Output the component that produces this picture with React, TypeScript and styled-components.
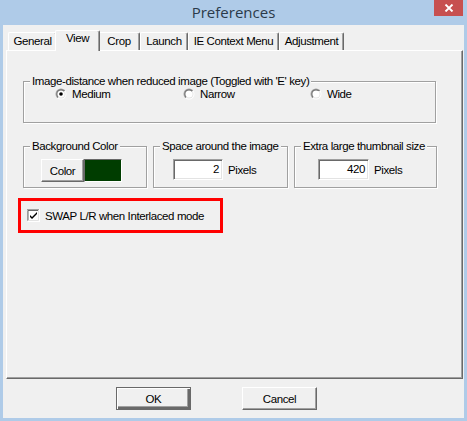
import React from "react";
import styled, { createGlobalStyle } from "styled-components";

const UI_FONT = `"Liberation Sans", Arial, sans-serif`;

const GlobalStyle = createGlobalStyle`
  html, body { margin: 0; padding: 0; }
  body {
    background: #afcbe8;
    font-family: ${UI_FONT};
    font-size: 11.5px;
    letter-spacing: -0.4px;
    color: #000;
  }
`;

const Window = styled.div`
  width: 467px;
  height: 421px;
  box-sizing: border-box;
  background: #afcbe8;
  display: flex;
  flex-direction: column;
`;

const TitleBar = styled.div`
  height: 25px;
  display: grid;
  grid-template-columns: 1fr auto 1fr;
  align-items: start;
`;

const Title = styled.div`
  grid-column: 2;
  font-family: "Open Sans", "Noto Sans", sans-serif;
  font-size: 15px;
  letter-spacing: 0;
  line-height: 20px;
  padding-top: 2px;
  color: #2b3a4a;
`;

const CloseButton = styled.div`
  grid-column: 3;
  justify-self: end;
  margin-right: 4px;
  width: 29px;
  height: 16px;
  background: #c75050;
  display: flex;
  align-items: center;
  justify-content: center;
`;

const Client = styled.div`
  flex: 1;
  margin: 0 3px 3px 3px;
  background: #f0f0f0;
  display: flex;
  flex-direction: column;
  padding: 5px 0 0 3px;
`;

const TabStrip = styled.div`
  display: flex;
  align-items: flex-end;
  height: 20px;
  padding-left: 2px;
`;

const Tab = styled.div<{ $w: number; $active?: boolean }>`
  box-sizing: border-box;
  width: ${(p) => p.$w + (p.$active ? 4 : 0)}px;
  height: ${(p) => (p.$active ? 21 : 18)}px;
  margin: 0 ${(p) => (p.$active ? -2 : 0)}px ${(p) => (p.$active ? -1 : 0)}px;
  position: relative;
  z-index: ${(p) => (p.$active ? 2 : 1)};
  background: #f0f0f0;
  border-top: 1px solid #fff;
  border-left: 1px solid #fff;
  border-right: 1px solid #696969;
  box-shadow: inset -1px 0 0 #a0a0a0;
  border-radius: 2px 2px 0 0;
  text-align: center;
  line-height: ${(p) => (p.$active ? 15 : 17)}px;
  white-space: nowrap;
`;

const Panel = styled.div`
  box-sizing: border-box;
  width: 457px;
  height: 329px;
  border-style: solid;
  border-width: 1px;
  border-color: #fff #696969 #696969 #fff;
  box-shadow: inset -1px -1px 0 #a0a0a0;
  padding: 30px 0 0 16px;
  display: flex;
  flex-direction: column;
  align-items: flex-start;
`;

const GroupBox = styled.div<{ $w: number }>`
  box-sizing: border-box;
  width: ${(p) => p.$w}px;
  height: 42px;
  border: 1px solid #a0a0a0;
  box-shadow: 1px 1px 0 #fff, inset 1px 1px 0 #fff;
  display: flex;
  flex-direction: column;
`;

const Legend = styled.div`
  align-self: flex-start;
  margin: -7px 0 0 6px;
  padding: 0 2px;
  line-height: 13px;
  background: #f0f0f0;
  white-space: nowrap;
`;

const RadioRow = styled.div`
  display: grid;
  grid-template-columns: 128px 127px auto;
  padding-left: 31px;
  height: 12px;
  align-items: center;
`;

const Option = styled.label`
  display: flex;
  align-items: center;
  gap: 5px;
  line-height: 12px;
`;

const Row = styled.div`
  display: flex;
  gap: 6px;
  margin-top: 23px;
`;

const GroupBody = styled.div<{ $pl: number }>`
  display: flex;
  align-items: center;
  padding-left: ${(p) => p.$pl}px;
  margin-top: 6px;
  gap: 5px;
`;

const PushButton = styled.button<{ $w: number; $default?: boolean }>`
  box-sizing: border-box;
  width: ${(p) => p.$w}px;
  height: 23px;
  padding: 0;
  margin: 0;
  font-family: ${UI_FONT};
  font-size: 11.5px;
  letter-spacing: -0.4px;
  color: #000;
  background: #f0f0f0;
  border-style: solid;
  border-width: 1px;
  border-color: ${(p) =>
    p.$default ? "#696969" : "#fff #696969 #696969 #fff"};
  box-shadow: ${(p) =>
    p.$default
      ? "inset 1px 1px 0 #fff, inset -2px -2px 0 #696969, inset -3px -3px 0 #a0a0a0"
      : "inset -1px -1px 0 #a0a0a0"};
  outline: none;
`;

const Swatch = styled.div<{ $c: string }>`
  width: 38px;
  height: 23px;
  box-sizing: border-box;
  background: ${(p) => p.$c};
  border: 1px solid #000;
  border-color: #696969 #fff #fff #696969;
  margin-left: -5px;
`;

const NumInput = styled.div<{ $w: number }>`
  box-sizing: border-box;
  width: ${(p) => p.$w}px;
  height: 21px;
  background: #fff;
  border-style: solid;
  border-width: 1px;
  border-color: #a0a0a0 #fff #fff #a0a0a0;
  box-shadow: inset 1px 1px 0 #696969, inset -1px -1px 0 #e3e3e3;
  text-align: right;
  padding-right: 3px;
  line-height: 19px;
`;

const Highlight = styled.div`
  box-sizing: border-box;
  width: 205px;
  height: 35px;
  margin: 10px 0 0 -5px;
  border: 3px solid #ff0000;
  display: flex;
  align-items: center;
  gap: 5px;
  padding-left: 6px;
  white-space: nowrap;
`;

const ButtonRow = styled.div`
  display: flex;
  gap: 51px;
  padding: 8px 0 0 110px;
`;

function Radio({ checked }: { checked?: boolean }) {
  return (
    <svg width="12" height="12" viewBox="0 0 12 12">
      <defs>
        <linearGradient id="rg" x1="0" y1="0" x2="1" y2="1">
          <stop offset="0.5" stopColor="#a0a0a0" />
          <stop offset="0.5" stopColor="#ffffff" />
        </linearGradient>
        <linearGradient id="rg2" x1="0" y1="0" x2="1" y2="1">
          <stop offset="0.5" stopColor="#696969" />
          <stop offset="0.5" stopColor="#e3e3e3" />
        </linearGradient>
      </defs>
      <circle cx="6" cy="6" r="5.5" fill="url(#rg)" />
      <circle cx="6" cy="6" r="4.5" fill="url(#rg2)" />
      <circle cx="6" cy="6" r="3.6" fill="#fff" />
      {checked && <circle cx="6" cy="6" r="1.8" fill="#000" />}
    </svg>
  );
}

function Check() {
  return (
    <svg width="13" height="13" viewBox="0 0 13 13">
      <rect x="0" y="0" width="13" height="13" fill="#fff" />
      <path d="M0 12.5V0.5H12.5" stroke="#a0a0a0" fill="none" />
      <path d="M1 11.5V1.5H11.5" stroke="#696969" fill="none" />
      <path d="M0.5 12.5H12.5V0" stroke="#fff" fill="none" />
      <path d="M1.5 11.5H11.5V1" stroke="#e3e3e3" fill="none" />
      <path d="M3 6 L5 8 L10 3 L10 5 L5 10 L3 8 Z" fill="#000" />
    </svg>
  );
}

export default function App() {
  return (
    <>
      <GlobalStyle />
      <Window>
        <TitleBar>
          <Title>Preferences</Title>
          <CloseButton>
            <svg width="10" height="8" viewBox="0 0 10 8">
              <path d="M1.5 0.5 L8.5 7.5 M8.5 0.5 L1.5 7.5" stroke="#fff" strokeWidth="1.9" />
            </svg>
          </CloseButton>
        </TitleBar>
        <Client>
          <TabStrip>
            <Tab $w={49}>General</Tab>
            <Tab $w={41} $active>View</Tab>
            <Tab $w={42}>Crop</Tab>
            <Tab $w={48}>Launch</Tab>
            <Tab $w={91}>IE Context Menu</Tab>
            <Tab $w={65}>Adjustment</Tab>
          </TabStrip>
          <Panel>
            <GroupBox $w={413}>
              <Legend>Image-distance when reduced image (Toggled with 'E' key)</Legend>
              <RadioRow>
                <Option><Radio checked />Medium</Option>
                <Option><Radio />Narrow</Option>
                <Option><Radio />Wide</Option>
              </RadioRow>
            </GroupBox>
            <Row>
              <GroupBox $w={124}>
                <Legend>Background Color</Legend>
                <GroupBody $pl={17}>
                  <PushButton $w={43}>Color</PushButton>
                  <Swatch $c="#003d00" />
                </GroupBody>
              </GroupBox>
              <GroupBox $w={135}>
                <Legend>Space around the image</Legend>
                <GroupBody $pl={19}>
                  <NumInput $w={50}>2</NumInput>
                  <span>Pixels</span>
                </GroupBody>
              </GroupBox>
              <GroupBox $w={143}>
                <Legend>Extra large thumbnail size</Legend>
                <GroupBody $pl={23}>
                  <NumInput $w={51}>420</NumInput>
                  <span>Pixels</span>
                </GroupBody>
              </GroupBox>
            </Row>
            <Highlight>
              <Check />
              <span>SWAP L/R when Interlaced mode</span>
            </Highlight>
          </Panel>
          <ButtonRow>
            <PushButton $w={75} $default>OK</PushButton>
            <PushButton $w={75}>Cancel</PushButton>
          </ButtonRow>
        </Client>
      </Window>
    </>
  );
}
